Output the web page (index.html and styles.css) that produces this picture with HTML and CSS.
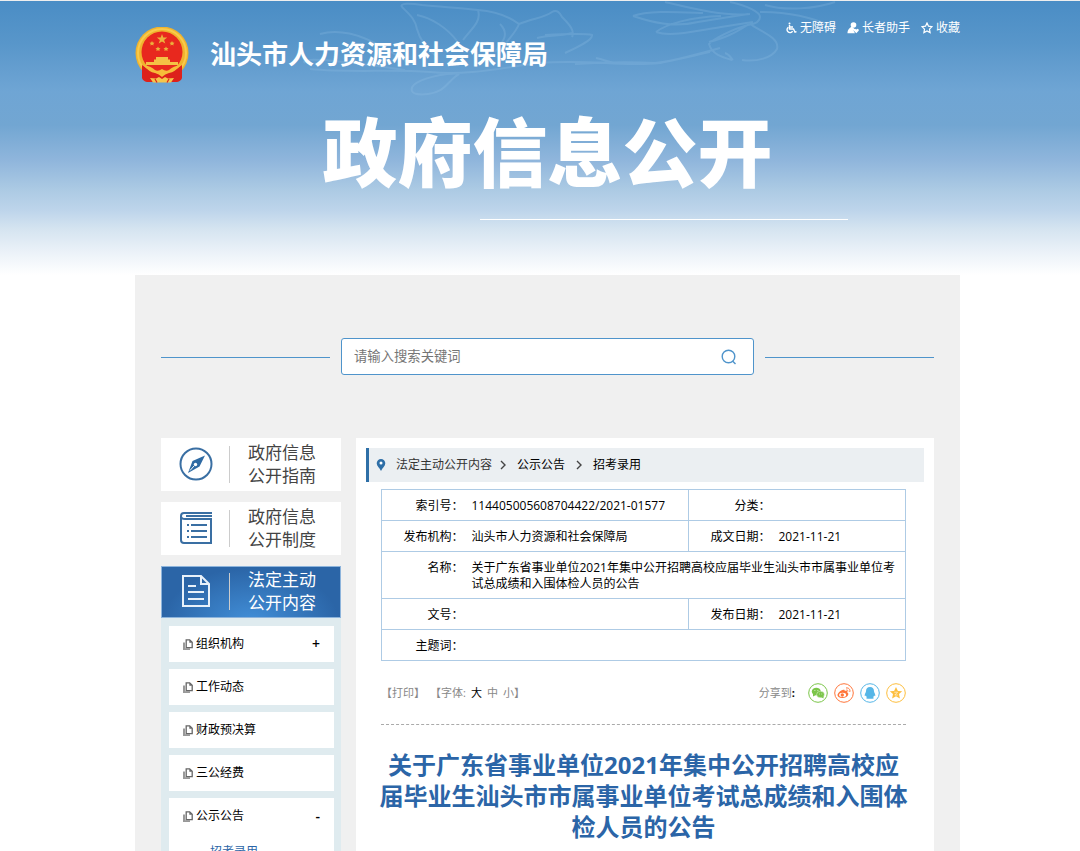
FILE: index.html
```html
<!DOCTYPE html>
<html lang="zh-CN">
<head>
  <meta charset="UTF-8">
  <title>汕头市人力资源和社会保障局</title>
  <link rel="stylesheet" href="styles.css">
</head>
<body>
  <svg class="sprite" width="0" height="0" aria-hidden="true">
    <symbol id="pages" viewBox="0 0 10 11">
      <path d="M1 3.500v6.700h6" fill="none" stroke="#999" stroke-width="2"/>
      <path d="M3.200.8h3.500l2.500 2.500v5.400h-6z" fill="#fff" stroke="#666" stroke-width="1.300"/>
      <path d="M6.300.8v2.900h2.900z" fill="#666"/>
    </symbol>
  </svg>

  <header class="header">
    <svg class="lotus" width="1080" height="110" viewBox="0 0 1080 110" aria-hidden="true">
      <path d="M402 6c-3-4 8-4 20-2 20 2 40 3 56 5 4 12-8 20-15 30M402 6c8 8 13 12 15 22 3 12 10 20 20 28M417 14c15 3 30 13 40 26M478 9c15 1 30 6 41 14-3 9-14 18-20 30M519 23c15-6 25-6 33-12 5-3 8 1 10 5 8 8 13 14 10 20M572 32c-10 3-22 2-35 5M545 34c20-1 40-2 47 0 1 5-14 12-27 18M500 23c10 10 3 18-5 28M320 33c30-8 60 10 90 30M305 62c-10-8 60 1 100 7M310 68c40 4 80 0 120 3 40 4 75-5 110-9 50-4 80 4 120 0 20-4 35-8 60-15M596 57c10 2 10 4 20 5M412 90c-3-8 15-14 35-17 10-1 15-1 9 2-10 8-12 16-28 18-8 1-15 0-16-3zM575 63c30-2 60-2 80-1 20-2 40-8 55-11"/>
      <path d="M665 1c25 6 60 15 85 12M633 15c15-6 45-4 70-3M633 15c18 6 40 12 65 6l50-8M656 31c10-8 35-15 65-16M656 31c15 5 40-1 65-5l32-5M730 1c18 4 30 10 30 15s-5 7-12 8c-15 4-35 14-39 19 3 10 12 13 23 16M750 23c12 8 30 14 27 25-5 9-20 13-35 11M709 41c15-4 25-8 40-18M765 4c20 6 50 4 70-3M760 11c30 0 50 5 75 15M725 52c4 1 6 5 8 7"/>
    </svg>
    <div class="top">
      <svg class="emblem" width="54" height="56" viewBox="0 0 54 56" aria-label="国徽">
        <circle cx="27" cy="26" r="26.500" fill="#f0b32e"/>
        <circle cx="27" cy="26" r="24" fill="none" stroke="#f9ca4b" stroke-width="2"/>
        <path d="M7 38q4 3 9 6l11 4 11-4q5-3 9-6v13q-1 3-5 4H12q-4-1-5-4z" fill="#dd211b"/>
        <circle cx="27" cy="25" r="20.500" fill="#e8281e"/>
        <path d="M27 7l1.300 3.600h3.900l-3.100 2.300 1.200 3.700-3.300-2.200-3.300 2.200 1.200-3.700-3.100-2.300h3.900z" fill="#ecb23c"/>
        <g fill="#ecb23c">
          <path d="M17 14l.8 1.500 1.700.2-1.200 1.200.3 1.700-1.600-.8-1.600.8.3-1.700-1.200-1.200 1.700-.2zM37 14l.8 1.500 1.700.2-1.200 1.200.3 1.700-1.600-.8-1.600.8.3-1.700-1.200-1.200 1.700-.2zM23 19.500l.8 1.500 1.700.2-1.200 1.200.3 1.700-1.600-.8-1.600.8.3-1.700-1.200-1.200 1.700-.2zM31 19.500l.8 1.500 1.700.2-1.200 1.200.3 1.700-1.600-.8-1.600.8.3-1.700-1.200-1.200 1.700-.2z"/>
        </g>
        <path d="M21 30h12v2.500h2V35h8v3H11v-3h8v-2.500h2z" fill="#f4c145"/>
        <path d="M8 38q8 1 12 5 3 2 7-1 4 3 7 1 4-4 12-5-6 7-12 8-4 1-7 4-3-3-7-4-6-1-12-8z" fill="#f6bc3a"/>
        <path d="M15 51l6 .5 3-1.500 3 2 3-2 3 1.500 6-.5-3 4.500H18z" fill="#f6c64a"/>
        <path d="M20 52l2 3.500M34 52l-2 3.500" stroke="#dd211b" stroke-width="1.200"/>
      </svg>
      <h1 class="site-name">汕头市人力资源和社会保障局</h1>
      <nav class="top-links">
        <a href="#">
          <svg width="12" height="12" viewBox="0 0 12 12" fill="none" stroke="#fff" stroke-width="1.400"><circle cx="4.500" cy="1.500" r="1" fill="#fff" stroke="none"/><path d="M4.500 3v4h4l1.500 3.200 1.500-.6M4.500 5H8M3.300 5.200a3 3 0 1 0 4.300 4"/></svg>
          无障碍
        </a>
        <a href="#">
          <svg width="12" height="12" viewBox="0 0 12 12" fill="#fff"><circle cx="6.500" cy="3" r="2.800"/><path d="M5 4.500L7.500 7l-1 1.500L8 11.200H.500Q.2 7 5 4.500zM9.300 11.300L6.900 8.800Q6.500 7 8 6.800l1.300.8 1.300-.8q1.500.2 1.100 2z"/></svg>
          长者助手
        </a>
        <a href="#">
          <svg width="12" height="12" viewBox="0 0 12 12" fill="none" stroke="#fff" stroke-width="1.200"><path d="M6 1l1.500 3.200 3.500.5-2.500 2.400.6 3.500L6 9 2.900 10.600l.6-3.500L1 4.700l3.500-.5z"/></svg>
          收藏
        </a>
      </nav>
    </div>
    <h2 class="banner">政府信息公开</h2>
    <div class="banner-line"></div>
  </header>

  <main class="main">
    <form class="search">
      <div class="search-box">
        <input type="text" placeholder="请输入搜索关键词" aria-label="请输入搜索关键词">
        <button type="button" aria-label="搜索">
          <svg width="16" height="16" viewBox="0 0 16 16" fill="none" stroke="#4f94cb" stroke-width="1.400"><circle cx="7.500" cy="7.500" r="6.300"/><path d="M11.500 12l3 3"/></svg>
        </button>
      </div>
    </form>

    <div class="columns">
      <aside class="sidebar">
        <a class="side-link" href="#">
          <svg width="34" height="34" viewBox="0 0 34 34"><circle cx="17" cy="17" r="15.500" fill="none" stroke="#3a6fa3" stroke-width="2"/><path d="M26 8.500L20.500 19.500 9 26 13.500 14z" fill="#2e6aa3"/><circle cx="16.500" cy="17.500" r="1.700" fill="#fff"/><path d="M15 19l-4 4.500" stroke="#fff"/></svg>
          <span>政府信息<br>公开指南</span>
        </a>
        <a class="side-link" href="#">
          <svg width="34" height="34" viewBox="0 0 34 34" fill="none" stroke="#3a6fa3" stroke-width="2"><path d="M33 2H5Q2 2 2 5v24q0 3 3 3h27V8H6Q2 8 2 5M7 5h26"/><path d="M8 14h2M8 20h2M8 26h2M12 14h16M12 20h16M12 26h16"/></svg>
          <span>政府信息<br>公开制度</span>
        </a>
        <a class="side-link active" href="#">
          <svg width="34" height="34" viewBox="0 0 34 34" fill="none" stroke="#e8f1fa" stroke-width="2"><path d="M4 2h18l8 8v22H4z"/><path d="M22 2v8h8M9 12h8M9 18h16M9 25h16"/></svg>
          <span>法定主动<br>公开内容</span>
        </a>
        <ul class="menu">
          <li><a href="#"><svg width="10" height="11"><use href="#pages"/></svg>组织机构<b>+</b></a></li>
          <li><a href="#"><svg width="10" height="11"><use href="#pages"/></svg>工作动态</a></li>
          <li><a href="#"><svg width="10" height="11"><use href="#pages"/></svg>财政预决算</a></li>
          <li><a href="#"><svg width="10" height="11"><use href="#pages"/></svg>三公经费</a></li>
          <li>
            <a href="#"><svg width="10" height="11"><use href="#pages"/></svg>公示公告<b>-</b></a>
            <a class="sub" href="#">招考录用</a>
          </li>
        </ul>
      </aside>

      <section class="content">
        <nav class="crumbs">
          <svg width="10" height="14" viewBox="0 0 10 14"><path d="M5 1a4.300 4.300 0 0 1 4.300 4.300C9.300 8 6.500 10 5 13 3.500 10 .7 8 .7 5.300A4.300 4.300 0 0 1 5 1z" fill="#2e6fa7"/><circle cx="5" cy="5" r="1.500" fill="#fff"/></svg>
          <a class="first" href="#">法定主动公开内容</a>
          <svg class="sep" width="6" height="10" viewBox="0 0 6 10"><path d="M1 1l4 4-4 4"/></svg>
          <a href="#">公示公告</a>
          <svg class="sep" width="6" height="10" viewBox="0 0 6 10"><path d="M1 1l4 4-4 4"/></svg>
          <a href="#">招考录用</a>
        </nav>

        <div class="article">
          <table class="info">
            <colgroup>
              <col class="col-label">
              <col class="col-wide">
              <col class="col-label">
              <col>
            </colgroup>
            <tr>
              <th>索引号：</th><td>114405005608704422/2021-01577</td>
              <th>分类：</th><td></td>
            </tr>
            <tr>
              <th>发布机构：</th><td>汕头市人力资源和社会保障局</td>
              <th>成文日期：</th><td>2021-11-21</td>
            </tr>
            <tr>
              <th>名称：</th>
              <td colspan="3">关于广东省事业单位2021年集中公开招聘高校应届毕业生汕头市市属事业单位考试总成绩和入围体检人员的公告</td>
            </tr>
            <tr>
              <th>文号：</th><td></td>
              <th>发布日期：</th><td>2021-11-21</td>
            </tr>
            <tr>
              <th>主题词：</th><td colspan="3"></td>
            </tr>
          </table>

          <div class="tools">
            <div class="font-tools">
              <a href="#">【打印】</a>
              <span>【字体:</span>
              <a class="on" href="#">大</a>
              <a href="#">中</a>
              <a href="#">小】</a>
            </div>
            <div class="share">
              <span>分享到<b>:</b></span>
              <a href="#" aria-label="微信"><svg width="20" height="20" viewBox="0 0 20 20"><circle cx="10" cy="10" r="9.300" fill="#fff" stroke="#7bc549"/><ellipse cx="8.300" cy="8.500" rx="4.500" ry="3.800" fill="#7bc549"/><path d="M5 10.500v3l3-1.500z" fill="#7bc549"/><ellipse cx="12.500" cy="11.500" rx="3.900" ry="3.200" fill="#7bc549" stroke="#fff" stroke-width=".4"/><path d="M13 14l2.500 1.500V13z" fill="#7bc549"/><path d="M6.500 7.500h.8M9.500 7.500h.8M11 11h.6M13.500 11h.6" stroke="#fff" stroke-width=".8"/></svg></a>
              <a href="#" aria-label="微博"><svg width="20" height="20" viewBox="0 0 20 20"><circle cx="10" cy="10" r="9.300" fill="#fff" stroke="#ff763b"/><path d="M8.500 7c1.500-.7 2.500-.3 2.200 1 2-.6 2.800 0 2.300 1.300 3 1.200.8 5.700-4.500 5.700C5 15 3.300 13.500 3.500 12 3.700 10 6.500 7.500 8.500 7z" fill="#ff763b"/><ellipse cx="8.600" cy="11.900" rx="3.500" ry="2.100" fill="#fff"/><circle cx="8.300" cy="12" r="1.700" fill="#ff763b"/><path d="M12 5c2.800-.6 4.600 1.700 3.700 4M12.300 7c1.200-.2 1.900.6 1.500 1.600" fill="none" stroke="#ff763b"/></svg></a>
              <a href="#" aria-label="QQ"><svg width="20" height="20" viewBox="0 0 20 20"><circle cx="10" cy="10" r="9.300" fill="#fff" stroke="#56b6e7"/><path d="M10 4c2.800 0 4 1.800 4 4.200 0 1.300 1.500 2.800 1.300 4.600-.2 1-1-.1-1.200-.2-.2.800-.6 1.300-1 1.700 1.200.5.900 1.500-.7 1.500H7.600c-1.600 0-1.900-1-.7-1.500-.4-.4-.8-.9-1-1.700-.2.100-1 1.200-1.200.2C4.500 11 6 9.500 6 8.200 6 5.800 7.200 4 10 4z" fill="#56b6e7"/></svg></a>
              <a href="#" aria-label="QQ空间"><svg width="20" height="20" viewBox="0 0 20 20"><circle cx="10" cy="10" r="9.300" fill="#fff" stroke="#fdbe3d"/><path d="M10 4l1.900 3.900 4.300.4-3.200 2.800.9 4.400-3.900-2.200-3.900 2.200.9-4.400-3.200-2.800 4.300-.4z" fill="#fdbe3d"/><path d="M8.200 9.200h3.400L8.800 12h3" fill="none" stroke="#fff" stroke-width=".6"/></svg></a>
            </div>
          </div>

          <h1 class="title">关于广东省事业单位2021年集中公开招聘高校应届毕业生汕头市市属事业单位考试总成绩和入围体检人员的公告</h1>
        </div>
      </section>
    </div>
  </main>
</body>
</html>
```
FILE: styles.css
```css
* {
  box-sizing: border-box;
}

body {
  margin: 0;
  border-top: 1px solid #eee;
  font-family: "Open Sans", "Noto Sans CJK SC", sans-serif;
  font-size: 12px;
  line-height: 16px;
  color: #000;
  background-color: #fff;
}

a {
  color: inherit;
  text-decoration: none;
}

.sprite {
  position: absolute;
}

/* header */
.header {
  position: relative;
  padding: 18px 120px 55px 135px;
  background: linear-gradient(#4a8dc5 0, #5896ca 42px, #6fa5d4 90px, #72a6d2 124px, #90b6dc 160px, #adcbe4 190px, #bed5eb 210px, #d5e4f0 228px, #eaf1f8 250px, #fff 274px);
  color: #fff;
}

.lotus {
  position: absolute;
  top: 0;
  left: 0;
  fill: none;
  stroke: #9cc8ea;
  stroke-width: 2;
  opacity: 0.22;
}

.top {
  position: relative;
  display: flex;
  align-items: flex-start;
}

.emblem {
  margin-top: 8px;
}

.site-name {
  margin: 16px 0 0 21px;
  font-size: 26px;
  line-height: 38px;
  font-weight: 700;
}

.top-links {
  display: flex;
  gap: 11px;
  margin-top: 1px;
  margin-left: auto;
}

.top-links a {
  display: flex;
  align-items: center;
  gap: 3px;
}

.banner {
  position: relative;
  margin: 25px 0 0;
  font-size: 75px;
  line-height: 88px;
  font-weight: 900;
  text-align: center;
}

.banner-line {
  width: 368px;
  height: 1px;
  margin: 23px auto 0 345px;
  background-color: #fff;
}

/* main */
.main {
  margin: 0 120px 0 135px;
  padding: 63px 26px 0;
  background-color: #f0f0f0;
}

.search {
  display: flex;
  align-items: center;
  gap: 11px;
}

.search::before,
.search::after {
  content: "";
  flex: 1;
  height: 1px;
  margin-top: 2px;
  background-color: #4f94cb;
}

.search-box {
  display: flex;
  align-items: center;
  width: 413px;
  height: 37px;
  padding: 0 16px 0 12px;
  border: 1px solid #4f94cb;
  border-radius: 3px;
  background-color: #fff;
}

.search-box input {
  flex: 1;
  padding: 0 0 2px;
  border: 0;
  outline: 0;
  font-family: inherit;
}

.search-box input::placeholder {
  color: #757575;
}

.search-box button {
  display: flex;
  padding: 0;
  border: 0;
  background: none;
  cursor: pointer;
}

.columns {
  display: flex;
  gap: 15px;
  margin-top: 63px;
}

/* sidebar */
.sidebar {
  flex: 0 0 180px;
}

.side-link {
  display: flex;
  align-items: center;
  height: 53px;
  margin-bottom: 11px;
  padding: 0 0 2px 18px;
  background-color: #fff;
  color: #444;
  font-size: 17px;
  line-height: 23px;
}

.side-link span {
  padding-left: 19px;
  position: relative;
  margin-left: 16px;
}

.side-link span::before {
  content: "";
  position: absolute;
  left: 0;
  top: 5px;
  bottom: 4px;
  width: 1px;
  background-color: #ccc;
}

.side-link.active {
  height: 52px;
  margin-bottom: 0;
  border: 1px solid #8db4dc;
  padding-left: 17px;
  background: radial-gradient(ellipse at 50% 110%, #428fd8, #2b65a7 70%);
  color: #fff;
}

.menu {
  margin: 0;
  padding: 8px 7px 0 8px;
  list-style: none;
  background-color: #dfebef;
}

.menu li {
  margin-bottom: 7px;
  background-color: #fff;
}

.menu a {
  display: flex;
  align-items: center;
  height: 36px;
  padding: 0 14px;
}

.menu svg {
  margin-right: 3px;
}

.menu b {
  margin-left: auto;
  font-size: 14px;
  font-weight: 600;
}

.menu .sub {
  padding-left: 41px;
  color: #2b65a7;
}

/* content */
.content {
  flex: 1;
  min-width: 0;
  padding: 10px;
  background-color: #fff;
}

.crumbs {
  display: flex;
  align-items: center;
  height: 34px;
  padding-left: 7px;
  border-left: 3px solid #2e6fa7;
  background-color: #ebeff2;
}

.crumbs .first {
  margin-left: 10px;
  color: #333;
}

.crumbs .sep {
  margin: 0 11px 0 8px;
  fill: none;
  stroke: #444;
  stroke-width: 1.4;
}

.crumbs .sep + a {
  margin-right: 3px;
}

.article {
  padding: 7px 18px 0 15px;
}

.info {
  width: 100%;
  table-layout: fixed;
  border-collapse: collapse;
  border: 1px solid #aecbe5;
}

.info .col-label {
  width: 82px;
}

.info .col-wide {
  width: 225px;
}

.info tr {
  height: 31px;
  border-top: 1px solid #aecbe5;
}

.info th,
.info td {
  padding: 8px 0 6px;
  vertical-align: top;
  font-weight: 400;
}

.info th {
  border-left: 1px solid #aecbe5;
  text-align: right;
}

.info td {
  padding-left: 8px;
  padding-right: 8px;
  text-align: left;
}

.tools {
  display: flex;
  justify-content: space-between;
  align-items: center;
  height: 64px;
  border-bottom: 1px dashed #aaa;
  font-size: 11px;
  color: #888;
}

.font-tools {
  display: flex;
  gap: 5px;
}

.font-tools .on,
.share b {
  color: #000;
}

.share {
  display: flex;
  align-items: center;
  gap: 6px;
}

.share span {
  margin-right: 7px;
}

.share svg {
  display: block;
}

.title {
  margin: 24px -2px 0;
  padding-bottom: 30px;
  font-size: 24px;
  line-height: 31px;
  font-weight: 700;
  color: #2b65a7;
  text-align: center;
}
```
